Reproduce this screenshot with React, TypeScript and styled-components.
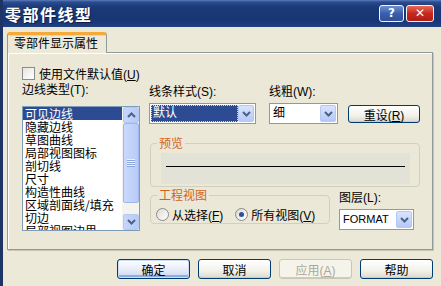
import styled, { createGlobalStyle } from "styled-components";

const GlobalStyle = createGlobalStyle`
  html, body {
    margin: 0;
    padding: 0;
    background: #ece9d8;
    overflow: hidden;
  }
  body {
    font-family: "Liberation Sans", "Noto Sans CJK SC", sans-serif;
    font-size: 12px;
    color: #000;
  }
  * { box-sizing: border-box; }
`;

const Window = styled.div`
  width: 441px;
  height: 286px;
  display: flex;
  flex-direction: column;
  background: #ece9d8;
  border-left: 3px solid #1c3566;
`;

const TitleBar = styled.div`
  height: 27px;
  flex-shrink: 0;
  display: flex;
  align-items: center;
  justify-content: space-between;
  padding: 0 7px 0 2px;
  background: linear-gradient(
    to bottom,
    #5a7cbc 0,
    #2c4c8f 2px,
    #1b3a78 7px,
    #183574 20px,
    #21407f 27px
  );
`;

const Title = styled.div`
  color: #fff;
  font-family: "Noto Sans CJK SC", sans-serif;
  font-weight: 700;
  font-size: 16px;
  letter-spacing: 1.5px;
  text-shadow: 1px 1px #0c1c44;
`;

const CaptionButtons = styled.div`
  display: flex;
  gap: 2px;
  margin-top: -1px;
`;

const CaptionButton = styled.div<{ $close?: boolean }>`
  width: ${(p) => (p.$close ? "28px" : "25px")};
  height: 17px;
  border: 1px solid #f2f4fa;
  border-radius: 3px;
  display: flex;
  align-items: center;
  justify-content: center;
  color: #fff;
  font-family: "DejaVu Sans", sans-serif;
  font-weight: 700;
  font-size: 12px;
  background: ${(p) =>
    p.$close
      ? "linear-gradient(to bottom, #e86a58, #c7281e 50%, #b01c14)"
      : "linear-gradient(to bottom, #6f8fd0, #3a5fae 50%, #2e509c)"};
`;

const Body = styled.div`
  flex: 1;
  display: flex;
  flex-direction: column;
  padding: 5px 0 0 4px;
`;

const Tab = styled.div`
  width: 100px;
  height: 21px;
  margin-bottom: -1px;
  position: relative;
  z-index: 1;
  background: #ece9d8;
  border: 1px solid #919b9c;
  border-bottom: none;
  border-top: 3px solid #f5a93a;
  border-radius: 3px 3px 0 0;
  box-shadow: inset 0 1px #ffd477;
  font-family: "Noto Sans CJK SC", sans-serif;
  font-size: 12px;
  line-height: 16px;
  padding-left: 6px;
`;

const Panel = styled.div`
  width: 426px;
  height: 198px;
  border: 1px solid #919b9c;
  box-shadow: inset 1px 1px #fff, 1px 1px #c8c5b5;
  background: #ebe8d8;
  padding: 14px 0 0 14px;
  display: flex;
  flex-direction: column;
`;

const CheckRow = styled.label`
  display: flex;
  align-items: center;
  gap: 4px;
  height: 13px;
`;

const CheckBox = styled.span`
  width: 13px;
  height: 13px;
  border: 1px solid #8c8c8c;
  background: linear-gradient(135deg, #e6e6e0, #ffffff);
`;

const Label = styled.div<{ $top?: number }>`
  height: 14px;
  line-height: 14px;
  margin-top: ${(p) => p.$top ?? 0}px;
  white-space: nowrap;
`;

const Key = styled.span`
  text-decoration: underline;
`;

const Main = styled.div`
  display: flex;
  gap: 9px;
  margin-top: 3px;
`;

const LeftColumn = styled.div`
  width: 118px;
  flex-shrink: 0;
  display: flex;
  flex-direction: column;
`;

const ListBox = styled.div`
  margin-top: 9px;
  height: 125px;
  border: 1px solid #7f9db9;
  background: #fff;
  display: flex;
  overflow: hidden;
`;

const ListItems = styled.div`
  flex: 1;
  overflow: hidden;
`;

const ListItem = styled.div<{ $selected?: boolean }>`
  height: 13px;
  line-height: 13px;
  padding-left: 2px;
  white-space: nowrap;
  font-family: "Noto Sans CJK SC", sans-serif;
  background: ${(p) => (p.$selected ? "#2c4b93" : "transparent")};
  color: ${(p) => (p.$selected ? "#fff" : "#000")};
`;

const ScrollBar = styled.div`
  width: 17px;
  display: flex;
  flex-direction: column;
  background: #f4f3ee;
  padding: 0 0 0 1px;
`;

const ScrollButton = styled.div`
  height: 16px;
  border: 1px solid #b4c8f4;
  border-radius: 2px;
  background: linear-gradient(to right, #c6d6fc, #b7cbf8);
  display: flex;
  align-items: center;
  justify-content: center;
`;

const Thumb = styled.div`
  height: 80px;
  border: 1px solid #9fb6ea;
  border-radius: 2px;
  background: linear-gradient(to right, #cad9fd, #b8cbf7);
  display: flex;
  align-items: center;
  justify-content: center;
`;

const Track = styled.div`
  flex: 1;
`;

const RightArea = styled.div`
  display: flex;
  flex-direction: column;
`;

const TopRow = styled.div`
  display: flex;
  align-items: flex-end;
`;

const Field = styled.div<{ $width: number; $gap?: number }>`
  width: ${(p) => p.$width}px;
  flex-shrink: 0;
  margin-left: ${(p) => p.$gap ?? 0}px;
  display: flex;
  flex-direction: column;
`;

const Combo = styled.div`
  margin-top: 4px;
  height: 21px;
  border: 1px solid #7f9db9;
  background: #fff;
  display: flex;
  padding: 1px;
`;

const ComboText = styled.div<{ $selected?: boolean; $small?: boolean }>`
  flex: 1;
  line-height: 17px;
  padding-left: 2px;
  font-size: ${(p) => (p.$small ? "11px" : "12px")};
  white-space: nowrap;
  overflow: hidden;
  background: ${(p) => (p.$selected ? "#2c4b93" : "transparent")};
  color: ${(p) => (p.$selected ? "#fff" : "#000")};
  outline: ${(p) => (p.$selected ? "1px dotted #d8d8d8" : "none")};
  outline-offset: -1px;
`;

const ComboButton = styled.div`
  width: 16px;
  flex-shrink: 0;
  border: 1px solid #b4c8f4;
  border-radius: 2px;
  background: linear-gradient(to bottom, #d9e4fd, #b5c9f7);
  display: flex;
  align-items: center;
  justify-content: center;
`;

const Button = styled.div<{ $default?: boolean; $disabled?: boolean }>`
  width: 73px;
  height: 20px;
  flex-shrink: 0;
  border: 1px solid ${(p) => (p.$disabled ? "#c9c7ba" : "#003c74")};
  border-radius: 3px;
  display: flex;
  align-items: center;
  justify-content: center;
  color: ${(p) => (p.$disabled ? "#aca899" : "#000")};
  background: ${(p) =>
    p.$disabled
      ? "#f5f4ea"
      : p.$default
      ? "linear-gradient(to bottom, #ffffff, #e6ecf8 55%, #c9d6ef)"
      : "linear-gradient(to bottom, #ffffff, #f2f1ea 60%, #dcd8cb)"};
  box-shadow: ${(p) =>
    p.$default
      ? "inset 0 0 0 1px #cddcf7, inset 0 -2px 0 1px #8eaee6"
      : "inset 0 -1px 0 #d0cbbe"};
`;

const ResetButton = styled(Button)`
  width: 72px;
  height: 18px;
  margin-left: 10px;
  margin-bottom: 1px;
`;

const GroupBox = styled.fieldset<{ $width: number; $top?: number }>`
  width: ${(p) => p.$width}px;
  flex-shrink: 0;
  margin: ${(p) => p.$top ?? 0}px 0 0 1px;
  border: 1px solid #d0d0bf;
  border-radius: 4px;
  padding: 0 9px 2px 10px;
  min-width: 0;
`;

const GroupTitle = styled.legend`
  margin-left: -4px;
  padding: 0 2px;
  line-height: 14px;
  font-family: "Noto Sans CJK SC", sans-serif;
  color: #d4631a;
`;

const PreviewBox = styled.div`
  margin-top: 3px;
  height: 31px;
  background: #e3e2d6;
  padding: 13px 5px 0;
`;

const PreviewLine = styled.div`
  height: 1px;
  background: #000;
`;

const BottomRow = styled.div`
  display: flex;
  align-items: flex-start;
  margin-top: 1px;
`;

const RadioRow = styled.div`
  display: flex;
  align-items: center;
  height: 14px;
  margin: 5px 0 0 -5px;
  gap: 12px;
`;

const RadioOption = styled.label`
  display: flex;
  align-items: center;
  gap: 3px;
  white-space: nowrap;
`;

const Radio = styled.span<{ $checked?: boolean }>`
  width: 13px;
  height: 13px;
  border-radius: 50%;
  border: 1px solid #8a8a8a;
  background: linear-gradient(135deg, #dcdcd4, #ffffff);
  display: flex;
  align-items: center;
  justify-content: center;
  &::after {
    content: "";
    width: 5px;
    height: 5px;
    border-radius: 50%;
    background: ${(p) => (p.$checked ? "#2d4f9e" : "transparent")};
  }
`;

const ButtonRow = styled.div`
  display: flex;
  justify-content: flex-end;
  gap: 8px;
  margin-top: 9px;
  padding-right: 8px;
`;

const Chevron = ({ up }: { up?: boolean }) => (
  <svg width="9" height="6" viewBox="0 0 9 6">
    <path
      d={up ? "M1 5 L4.5 1.5 L8 5" : "M1 1 L4.5 4.5 L8 1"}
      fill="none"
      stroke="#4d6185"
      strokeWidth="2"
    />
  </svg>
);

const Grip = () => (
  <svg width="8" height="8" viewBox="0 0 8 8">
    {[0, 2, 4, 6].map((y) => (
      <line key={y} x1="0" x2="8" y1={y + 0.5} y2={y + 0.5} stroke="#eef3fe" />
    ))}
    {[1, 3, 5, 7].map((y) => (
      <line key={y} x1="0" x2="8" y1={y + 0.5} y2={y + 0.5} stroke="#8aa4dc" />
    ))}
  </svg>
);

const edgeTypes = [
  "可见边线",
  "隐藏边线",
  "草图曲线",
  "局部视图图标",
  "剖切线",
  "尺寸",
  "构造性曲线",
  "区域剖面线/填充",
  "切边",
  "局部视图边界",
];

export default function App() {
  return (
    <>
      <GlobalStyle />
      <Window>
        <TitleBar>
          <Title>零部件线型</Title>
          <CaptionButtons>
            <CaptionButton>?</CaptionButton>
            <CaptionButton $close>✕</CaptionButton>
          </CaptionButtons>
        </TitleBar>
        <Body>
          <Tab>零部件显示属性</Tab>
          <Panel>
            <CheckRow>
              <CheckBox />
              <span>
                使用文件默认值(<Key>U</Key>)
              </span>
            </CheckRow>
            <Main>
              <LeftColumn>
                <Label>边线类型(T):</Label>
                <ListBox>
                  <ListItems>
                    {edgeTypes.map((t, i) => (
                      <ListItem key={t} $selected={i === 0}>
                        {t}
                      </ListItem>
                    ))}
                  </ListItems>
                  <ScrollBar>
                    <ScrollButton>
                      <Chevron up />
                    </ScrollButton>
                    <Thumb>
                      <Grip />
                    </Thumb>
                    <Track />
                    <ScrollButton>
                      <Chevron />
                    </ScrollButton>
                  </ScrollBar>
                </ListBox>
              </LeftColumn>
              <RightArea>
                <TopRow>
                  <Field $width={107}>
                    <Label $top={2}>线条样式(S):</Label>
                    <Combo>
                      <ComboText $selected>默认</ComboText>
                      <ComboButton>
                        <Chevron />
                      </ComboButton>
                    </Combo>
                  </Field>
                  <Field $width={69} $gap={13}>
                    <Label $top={2}>线粗(W):</Label>
                    <Combo>
                      <ComboText>细</ComboText>
                      <ComboButton>
                        <Chevron />
                      </ComboButton>
                    </Combo>
                  </Field>
                  <ResetButton>
                    <span>
                      重设(<Key>R</Key>)
                    </span>
                  </ResetButton>
                </TopRow>
                <GroupBox $width={270} $top={12}>
                  <GroupTitle>预览</GroupTitle>
                  <PreviewBox>
                    <PreviewLine />
                  </PreviewBox>
                </GroupBox>
                <BottomRow>
                  <GroupBox $width={180}>
                    <GroupTitle>工程视图</GroupTitle>
                    <RadioRow>
                      <RadioOption>
                        <Radio />
                        <span>
                          从选择(<Key>F</Key>)
                        </span>
                      </RadioOption>
                      <RadioOption>
                        <Radio $checked />
                        <span>
                          所有视图(<Key>V</Key>)
                        </span>
                      </RadioOption>
                    </RadioRow>
                  </GroupBox>
                  <Field $width={75} $gap={9}>
                    <Label $top={3}>图层(L):</Label>
                    <Combo>
                      <ComboText $small>FORMAT</ComboText>
                      <ComboButton>
                        <Chevron />
                      </ComboButton>
                    </Combo>
                  </Field>
                </BottomRow>
              </RightArea>
            </Main>
          </Panel>
          <ButtonRow>
            <Button $default>确定</Button>
            <Button>取消</Button>
            <Button $disabled>
              <span>
                应用(<Key>A</Key>)
              </span>
            </Button>
            <Button>帮助</Button>
          </ButtonRow>
        </Body>
      </Window>
    </>
  );
}
